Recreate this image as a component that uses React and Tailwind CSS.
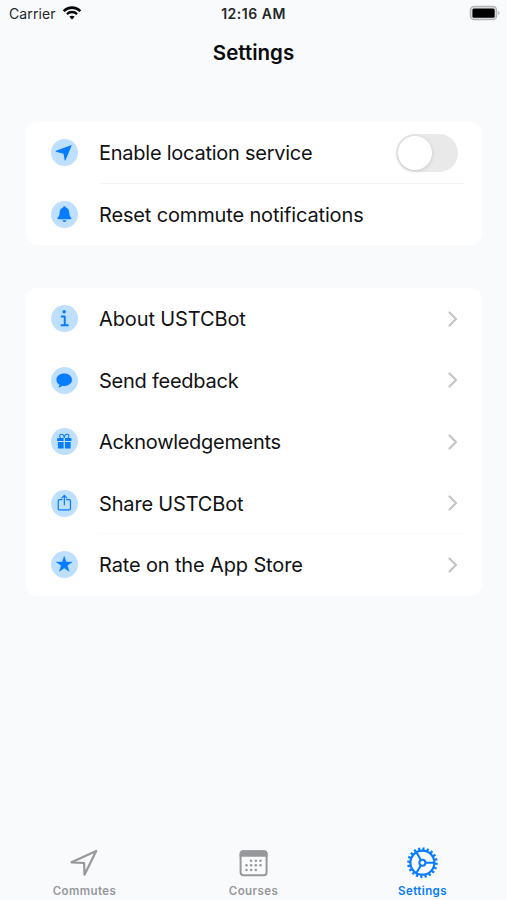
const sections = [
  [
    { icon: "location", label: "Enable location service", toggle: true, divider: "border-[#f4f4f5]", tracking: "tracking-[-0.25px]" },
    { icon: "bell", label: "Reset commute notifications", tracking: "tracking-[-0.15px]" },
  ],
  [
    { icon: "info", label: "About USTCBot", chevron: true, tracking: "tracking-[-0.12px]" },
    { icon: "chat", label: "Send feedback", chevron: true, tracking: "tracking-[-0.25px]" },
    { icon: "gift", label: "Acknowledgements", chevron: true, tracking: "tracking-[-0.3px]" },
    { icon: "share", label: "Share USTCBot", chevron: true, divider: "border-[#f9f9f9]", tracking: "tracking-[-0.17px]" },
    { icon: "star", label: "Rate on the App Store", chevron: true, tracking: "tracking-[-0.14px]" },
  ],
];

const glyphs = {
  location: <path d="M4.9 11.5 19.6 6.1c.5-.2.8.1.6.6l-6 14.2c-.2.5-.7.4-.8-.1L12.3 14.4 5 12.4c-.5-.1-.5-.7-.1-.9Z" />,
  bell: (
    <path d="M13.2 5.2c.8 0 1.3.6 1.4 1.3 2.1.7 3.2 2.5 3.3 4.9.1 2.3.5 3.6 1.7 4.7.8.8.7 1.7-.4 1.7H7.2c-1.1 0-1.2-.9-.4-1.7 1.2-1.1 1.6-2.4 1.7-4.7.1-2.4 1.2-4.2 3.3-4.9.1-.7.6-1.3 1.4-1.3ZM11.2 18.9h4c-.1 1-.9 1.7-2 1.7s-1.9-.7-2-1.7Z" />
  ),
  info: (
    <>
      <circle cx="12.9" cy="6.7" r="1.7" />
      <path d="M10.5 11.2h3v8.600M10.300 19.900h6.200" fill="none" stroke="currentColor" strokeWidth="1.9" strokeLinecap="round" strokeLinejoin="round" />
    </>
  ),
  chat: <path d="M13 6.500c4.300 0 7.600 2.700 7.600 6.100s-3.200 6-7.400 6c-.7 0-1.300-.1-1.900-.2-1 .8-2.300 1.500-3.300 1.600-.6.1-.7-.3-.4-.7.4-.5.7-1.100.8-1.800-2-1-3.100-2.800-3.100-4.900 0-3.400 3.300-6.100 7.700-6.100Z" />,
  gift: (
    <>
      <path d="M6.700 9.700h5.700v3H6v-2.200c0-.5.300-.8.700-.8ZM13.700 9.700h5.700c.4 0 .7.300.7.800v2.200h-6.400ZM6.800 13.700h5.600v6.500H8c-.8 0-1.200-.4-1.200-1.200ZM13.700 13.700h5.600V19c0 .8-.4 1.200-1.200 1.200h-4.400Z" />
      <path d="M13 9.700c-.3-2.600-1.500-3.700-3-3.600-1.900.1-2.100 2.800-.4 3.600M13 9.700c.3-2.600 1.500-3.700 3-3.600 1.900.1 2.100 2.800.4 3.600" fill="none" stroke="currentColor" strokeWidth="1.100" />
    </>
  ),
  share: (
    <path
      d="M10.800 9.500H8.300c-.8 0-1.200.4-1.200 1.200v7.700c0 .8.4 1.200 1.200 1.200h9.600c.8 0 1.200-.4 1.200-1.200v-7.700c0-.8-.4-1.200-1.200-1.200h-2.500M13.100 14.500V5.400M10.700 7.700l2.400-2.400 2.400 2.400"
      fill="none"
      stroke="currentColor"
      strokeWidth="1.200"
      strokeLinecap="round"
      strokeLinejoin="round"
    />
  ),
  star: <path d="m13 5.200 1.900 5.600h5.900L16 14.300l1.800 5.700L13 16.600 8.200 20l1.800-5.700-4.800-3.500h5.900Z" stroke="currentColor" strokeWidth=".4" strokeLinejoin="round" />,
};

function StatusBar() {
  return (
    <header className="grid h-[26px] grid-cols-3 items-center text-[14px] text-[#242628]">
      <div className="flex items-center gap-[6px] pl-[9px]">
        <span className="tracking-[0.1px]">Carrier</span>
        <svg width="20" height="16" viewBox="0 0 20 16" fill="none" stroke="#050505" className="-mt-px">
          <path d="M1.700 6.100C6.300 1.500 13.700 1.500 18.300 6.100" strokeWidth="2.600" />
          <path d="M4.900 9.100c2.800-2.800 7.400-2.800 10.200 0" strokeWidth="2.300" />
          <path d="m10 14.500-2.700-2.700c1.500-1.500 3.900-1.500 5.400 0Z" fill="#050505" stroke="none" />
        </svg>
      </div>
      <span className="text-center font-semibold tracking-[0.5px]">12:16 AM</span>
      <svg width="32" height="16" viewBox="0 0 32 16" className="ml-auto mr-[6px]">
        <rect x="1.500" y="1.500" width="26" height="13" rx="3.600" fill="#e3e4e5" stroke="#b3b4b6" strokeWidth="1.500" />
        <rect x="3.400" y="3.500" width="22.300" height="9.200" rx="1.500" />
        <path d="M29.200 5.700c1.800.8 1.800 3.800 0 4.600Z" fill="#b3b4b6" />
      </svg>
    </header>
  );
}

function Row({ item }) {
  return (
    <div className="flex h-[61.5px] pl-[25px]">
      <svg width="27" height="27" viewBox="0 0 26.500 26.500" fill="currentColor" className="mr-[21px] shrink-0 self-center text-[#087cff]">
        <circle cx="13.250" cy="13.250" r="13.250" fill="#bfdfff" />
        {glyphs[item.icon]}
      </svg>
      <div className={`mr-[18px] flex flex-1 items-center justify-between border-b pt-px ${item.divider ?? "border-transparent"}`}>
        <span className={`whitespace-nowrap pt-px text-[20px] ${item.tracking}`}>{item.label}</span>
        {item.toggle && (
          <button type="button" role="switch" aria-checked="false" aria-label={item.label} className="mr-[6px] h-[38px] w-[62px] rounded-full bg-[#e9e9ea] p-[2px]">
            <span className="block h-[34px] w-[34px] rounded-full bg-white shadow-[0_1px_4px_rgba(0,0,0,0.14)]" />
          </button>
        )}
        {item.chevron && (
          <svg width="12" height="18" viewBox="0 0 12 18" fill="none" stroke="#c4c4c6" strokeWidth="2.200" strokeLinecap="round" strokeLinejoin="round" className="mr-[5px]">
            <path d="m2.500 2.500 6.500 6.500-6.500 6.500" />
          </svg>
        )}
      </div>
    </div>
  );
}

const dots = [
  [13.8, 13.7], [18.5, 13.7], [23.2, 13.7],
  [9.2, 18.3], [13.8, 18.3], [18.5, 18.3], [23.2, 18.3],
  [9.2, 23], [13.8, 23], [18.5, 23],
];

function Tab({ label, active, children }) {
  return (
    <button type="button" className={`flex flex-col items-center ${active ? "text-[#087cff]" : "text-[#97989b]"}`}>
      <svg width="32" height="32" viewBox="0 0 32 32" fill="none" stroke="currentColor">
        {children}
      </svg>
      <span className="mt-[4px] text-[11.5px] font-semibold leading-4 tracking-[0.4px]">{label}</span>
    </button>
  );
}

export default function App() {
  return (
    <div className="flex h-[900px] w-[507px] flex-col overflow-hidden bg-[#f8fafc] font-['Inter',sans-serif] text-[#111214]">
      <StatusBar />
      <h1 className="mt-[12px] text-center text-[20.5px] font-semibold leading-[30px] text-[#090a0b]">Settings</h1>
      <main className="mt-[54px] flex flex-1 flex-col gap-[43px] pl-[26px] pr-[25px]">
        {sections.map((rows) => (
          <section key={rows[0].label} className="rounded-[12px] bg-white">
            {rows.map((item) => (
              <Row key={item.label} item={item} />
            ))}
          </section>
        ))}
      </main>
      <nav className="grid h-[53px] grid-cols-3 items-start">
        <Tab label="Commutes">
          <path d="M2.500 15.300 27.200 4 15.500 27.700l-.4-11.700Z" strokeWidth="2.200" strokeLinejoin="round" />
        </Tab>
        <Tab label="Courses">
          <g transform="translate(-0.7 0)">
            <rect x="3.300" y="4.200" width="26" height="24" rx="3" strokeWidth="2" />
            <path d="M2.300 9.700V7c0-2.400 1.400-3.800 3.800-3.800h20.400c2.400 0 3.800 1.400 3.800 3.800v2.700Z" fill="currentColor" stroke="none" />
            {dots.map(([x, y]) => (
              <circle key={`${x}-${y}`} cx={x} cy={y} r="1.250" fill="currentColor" stroke="none" />
            ))}
          </g>
        </Tab>
        <Tab label="Settings" active>
          <g transform="translate(-0.6 0)">
            <circle cx="16" cy="15.700" r="13.800" strokeWidth="3" pathLength="40" strokeDasharray="1 1" />
            <circle cx="16" cy="15.700" r="12" strokeWidth="2.200" />
            <circle cx="16" cy="15.700" r="3" strokeWidth="2" />
            <path d="M19 15.700h9M14.500 13.100 10 5.300M14.500 18.300 10 26.100" strokeWidth="2.100" />
          </g>
        </Tab>
      </nav>
    </div>
  );
}
